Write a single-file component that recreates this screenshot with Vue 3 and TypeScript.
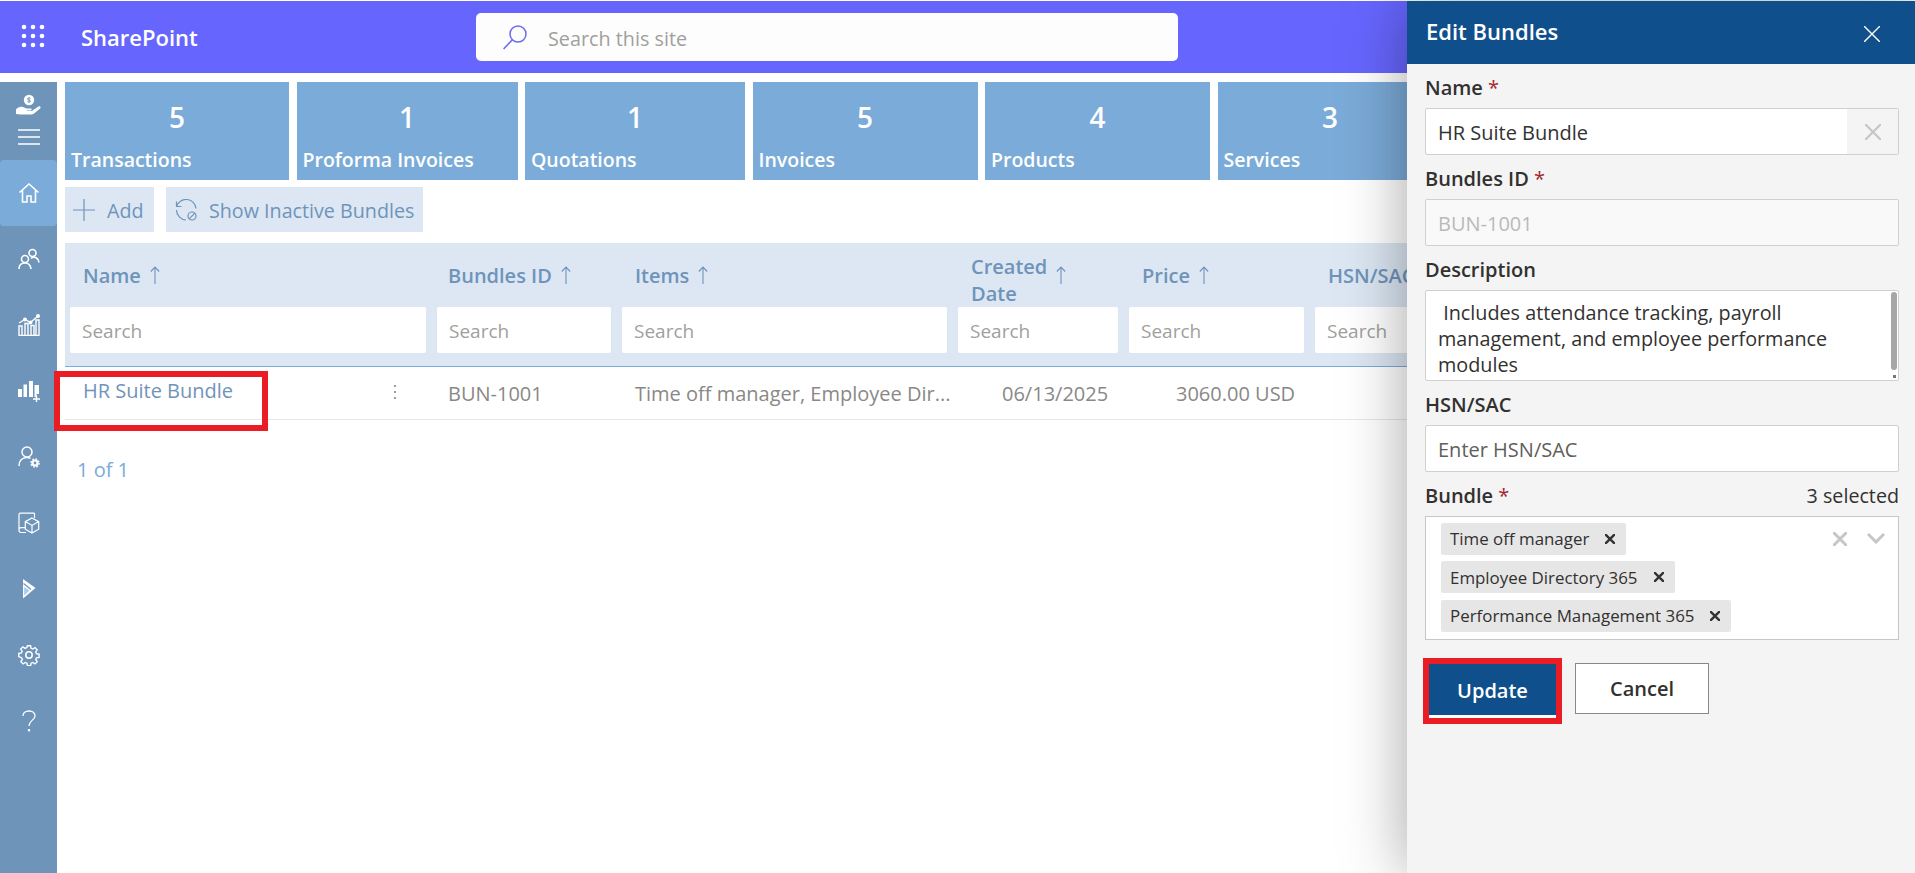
<script setup lang="ts">
const stats = [
  { n: 5, label: 'Transactions', w: 224 },
  { n: 1, label: 'Proforma Invoices', w: 221 },
  { n: 1, label: 'Quotations', w: 220 },
  { n: 5, label: 'Invoices', w: 225 },
  { n: 4, label: 'Products', w: 225 },
  { n: 3, label: 'Services', w: 225 },
]
const columns = [
  { label: 'Name', cls: '' },
  { label: 'Bundles ID', cls: '' },
  { label: 'Items', cls: '' },
  { label: 'Created Date', cls: 'two' },
  { label: 'Price', cls: '' },
  { label: 'HSN/SAC', cls: '' },
]
const chips = ['Time off manager', 'Employee Directory 365', 'Performance Management 365']
</script>

<template>
  <div class="page">
    <header class="topbar">
      <svg class="waffle" width="24" height="24" viewBox="0 0 24 24" fill="#fff">
        <circle cx="3" cy="3" r="2.3"/><circle cx="12" cy="3" r="2.3"/><circle cx="21" cy="3" r="2.3"/>
        <circle cx="3" cy="12" r="2.3"/><circle cx="12" cy="12" r="2.3"/><circle cx="21" cy="12" r="2.3"/>
        <circle cx="3" cy="21" r="2.3"/><circle cx="12" cy="21" r="2.3"/><circle cx="21" cy="21" r="2.3"/>
      </svg>
      <span class="brand">SharePoint</span>
      <div class="site-search">
        <svg width="24" height="25" viewBox="0 0 24 25" fill="none" stroke="#6a6aee" stroke-width="1.500">
          <circle cx="15" cy="9" r="8"/><path d="M9.300 14.700.6 24"/>
        </svg>
        <span>Search this site</span>
      </div>
    </header>

    <div class="body">
      <nav class="side">
        <div class="side-head">
          <svg width="28" height="22" viewBox="0 0 28 22" fill="#fff">
            <circle cx="14" cy="6" r="5.200"/>
            <path d="M1 15.500c2-2.500 5-3.200 7.500-2.200l3 1.100h4.200c1.300 0 1.300 2 0 2h-4l.1.700h5l6.600-4.600c1.600-.9 3 .7 1.700 2l-6.300 5.200c-.8.600-1.500.8-2.500.8H5.500L1 20z"/>
            <path d="M14 3.200v5.600M15.600 4.500c-.8-.7-3.200-.6-3.200.6 0 1.500 3.200.6 3.200 2 0 1.100-2.400 1.200-3.200.5" fill="none" stroke="#6f94ba" stroke-width=".9"/>
          </svg>
          <svg class="burger" width="22" height="16" viewBox="0 0 22 16" stroke="#fff" stroke-width="1.300">
            <path d="M0 1h22M0 8h22M0 15h22"/>
          </svg>
        </div>
        <a class="side-item active">
          <svg width="22" height="22" viewBox="0 0 22 22" fill="none" stroke="#fff" stroke-width="1.600">
            <path d="M1.500 10.500 11 2l9.500 8.500M4.500 8.500V20h4.500v-6h4v6h4.500V8.500"/>
          </svg>
        </a>
        <a class="side-item">
          <svg width="22" height="22" viewBox="0 0 22 22" fill="none" stroke="#fff" stroke-width="1.600">
            <circle cx="14.500" cy="5" r="3.500"/><circle cx="7" cy="11" r="3.500"/>
            <path d="M1 21c0-4 2.500-6 6-6s5.500 2 6 6M13 10.500c1.500-1.500 4-1.500 5.500-.5s2.500 2.500 2.500 4.500"/>
          </svg>
        </a>
        <a class="side-item">
          <svg width="22" height="22" viewBox="0 0 22 22" fill="none" stroke="#fff" stroke-width="1.400">
            <path d="M1 9 7 5.500l5.500 3L20 2"/>
            <circle cx="7" cy="5.500" r="1.300" fill="#fff"/><circle cx="12.500" cy="8.500" r="1.300" fill="#fff"/><circle cx="20" cy="2" r="1.300" fill="#fff"/>
            <path d="M1 21.500V12h3v9.500M7 21.500V9.500h3v12M13 21.500V11.500h3v10M18 21.500V6h3v15.500M.5 21.500h21"/>
          </svg>
        </a>
        <a class="side-item">
          <svg width="22" height="22" viewBox="0 0 22 22" fill="#fff">
            <path d="M0 9h4v8H0zM5.500 4.500H9V17H5.500zM11 1h4v16h-4zM16.500 5H21v9h-2.500v3h-2z"/>
            <path d="M15 19h7M18.500 15.500v7" stroke="#fff" stroke-width="1.400"/>
          </svg>
        </a>
        <a class="side-item">
          <svg width="22" height="22" viewBox="0 0 22 22" fill="none" stroke="#fff" stroke-width="1.500">
            <circle cx="9" cy="6" r="5"/>
            <path d="M1 20c0-5 3-8.500 8-8.500 1.500 0 2.500.3 3.500.8"/>
            <circle cx="17" cy="17" r="2.500" stroke-width="2.200"/>
            <circle cx="17" cy="17" r="4" stroke-width="1.500" stroke-dasharray="1.700 1.440"/>
          </svg>
        </a>
        <a class="side-item">
          <svg width="22" height="22" viewBox="0 0 22 22" fill="none" stroke="#fff" stroke-width="1.200">
            <path d="M8 20.500H3c-1.200 0-2-.8-2-2V2.500c0-.8.500-1.300 1.300-1.300h13.400c.5 0 .8.300.8.800V6M1 17.500c0-1 .8-1.800 2-1.800h4"/>
            <path d="m14 6 6.700 3.600v7.600L14 21l-6.700-3.800V9.600zM7.300 9.600l6.700 3.800 6.700-3.800M14 13.400V21"/>
          </svg>
        </a>
        <a class="side-item">
          <svg width="14" height="20" viewBox="0 0 14 20">
            <path fill="#fff" d="M1 0 13.500 9 1 19.500z"/>
            <path fill="#a9cdec" d="M2.200 8 7.500 11.500 2.200 16.500z"/>
            <path fill="none" stroke="#6f94ba" stroke-width="1.200" d="M1.500 4.500 9 10.500"/>
          </svg>
        </a>
        <a class="side-item">
          <svg width="22" height="22" viewBox="0 0 22 22" fill="none" stroke="#fff" stroke-width="1.500">
            <circle cx="11" cy="11" r="3.200"/>
            <path d="M9.300 1h3.400l.5 2.800 1.900.8 2.300-1.600 2.400 2.400-1.600 2.300.8 1.900 2.800.5v3.400l-2.800.5-.8 1.900 1.600 2.300-2.400 2.400-2.300-1.600-1.900.8-.5 2.800H9.300l-.5-2.800-1.900-.8-2.300 1.600-2.400-2.400 1.600-2.300-.8-1.900L0 12.700V9.300l2.800-.5.8-1.900L2 4.600 4.400 2.200l2.300 1.600 1.900-.8z" transform="translate(.8 .8) scale(.93)"/>
          </svg>
        </a>
        <a class="side-item">
          <svg width="14" height="22" viewBox="0 0 14 22" fill="none" stroke="#fff" stroke-width="1.300">
            <path d="M1 6c0-3 2.500-5 6-5s6 2 6 5c0 4-6 4.500-6 10"/><circle cx="7" cy="20.200" r=".6" fill="#fff"/>
          </svg>
        </a>
      </nav>

      <main class="main">
        <section class="stats">
          <div v-for="s in stats" :key="s.label" class="stat" :style="{ width: s.w + 'px' }">
            <div class="stat-n">{{ s.n }}</div>
            <div class="stat-l">{{ s.label }}</div>
          </div>
        </section>

        <section class="toolbar">
          <button class="tool add">
            <svg width="22" height="22" viewBox="0 0 22 22" stroke="#6f94ba" stroke-width="1.200"><path d="M11 0v22M0 11h22"/></svg>
            <span>Add</span>
          </button>
          <button class="tool inactive">
            <svg width="22" height="22" viewBox="0 0 22 22" fill="none" stroke="#6f94ba" stroke-width="1.200">
              <path d="M1.500 7.500A10 10 0 0 1 21 9.500M1.500 2.500v5h5M1.500 11a10 10 0 0 0 9.500 10"/>
              <circle cx="17" cy="17" r="4"/><path d="m14.200 19.800 5.600-5.600"/>
            </svg>
            <span>Show Inactive Bundles</span>
          </button>
        </section>

        <section class="table">
          <div class="thead">
            <div class="grid labels">
              <div v-for="c in columns" :key="c.label" class="th" :class="c.cls">
                <span class="th-text">{{ c.label }}</span>
                <svg v-if="c.label !== 'HSN/SAC'" width="10" height="18" viewBox="0 0 10 18" fill="none" stroke="#6f94ba" stroke-width="1.100"><path d="M5 18V1M.8 5.500 5 1l4.200 4.500"/></svg>
              </div>
            </div>
            <div class="grid filters">
              <div v-for="c in columns" :key="c.label" class="filter">Search</div>
            </div>
          </div>
          <div class="row">
            <div class="grid row-grid">
              <div class="cell name-cell">
                <a class="link">HR Suite Bundle</a>
                <svg class="kebab" width="4" height="16" viewBox="0 0 4 16" fill="#7a7a7a"><circle cx="2" cy="2" r="1"/><circle cx="2" cy="8" r="1"/><circle cx="2" cy="14" r="1"/></svg>
              </div>
              <div class="cell id">BUN-1001</div>
              <div class="cell">Time off manager, Employee Dir...</div>
              <div class="cell date">06/13/2025</div>
              <div class="cell price">3060.00 USD</div>
              <div class="cell"></div>
            </div>
          </div>
          <div class="count">1 of 1</div>
        </section>

        <div class="mark mark-name"></div>
      </main>
    </div>

    <aside class="panel">
      <div class="panel-head">
        <span>Edit Bundles</span>
        <svg width="16" height="16" viewBox="0 0 16 16" stroke="#fff" stroke-width="1.400"><path d="m0 0 16 16M16 0 0 16"/></svg>
      </div>
      <div class="form">
        <label class="lab">Name <i>*</i></label>
        <div class="field name-field">
          <span class="val">HR Suite Bundle</span>
          <span class="clear"><svg width="16" height="16" viewBox="0 0 16 16" stroke="#c8c6c4" stroke-width="2.200"><path d="m0 0 16 16M16 0 0 16"/></svg></span>
        </div>
        <label class="lab">Bundles ID <i>*</i></label>
        <div class="field disabled"><span class="val">BUN-1001</span></div>
        <label class="lab">Description</label>
        <div class="area">
          <p>&nbsp;Includes attendance tracking, payroll management, and employee performance modules</p>
          <div class="thumb"></div>
          <div class="grip"></div>
        </div>
        <label class="lab">HSN/SAC</label>
        <div class="field"><span class="val hint">Enter HSN/SAC</span></div>
        <div class="lab-row">
          <label class="lab">Bundle <i>*</i></label>
          <span class="selected">3 selected</span>
        </div>
        <div class="multi">
          <div class="chips">
            <div v-for="c in chips" :key="c" class="chip">
              <span>{{ c }}</span>
              <svg width="10" height="10" viewBox="0 0 10 10" stroke="#333" stroke-width="2.400"><path d="m0 0 10 10M10 0 0 10"/></svg>
            </div>
          </div>
          <div class="multi-icons">
            <svg width="14" height="14" viewBox="0 0 14 14" stroke="#c8c6c4" stroke-width="3"><path d="m0 0 14 14M14 0 0 14"/></svg>
            <svg width="18" height="11" viewBox="0 0 18 11" fill="none" stroke="#c8c6c4" stroke-width="3"><path d="m1 1 8 8 8-8"/></svg>
          </div>
        </div>
        <div class="actions">
          <button class="btn update">Update</button>
          <button class="btn cancel">Cancel</button>
        </div>
      </div>
    </aside>
  </div>
</template>

<style>
html, body { margin: 0; background: #fff; overflow: hidden; }
</style>

<style scoped>
.page {
  position: relative;
  width: 1915px;
  height: 873px;
  overflow: hidden;
  font-family: "Open Sans", "Noto Sans", sans-serif;
  background: #fff;
  padding-top: 1px;
  box-sizing: border-box;
}
.topbar {
  height: 72px;
  background: #6666ff;
  display: flex;
  align-items: center;
  color: #fff;
}
.waffle { margin-left: 21px; margin-top: -2px; flex: none; }
.brand { margin-left: 36px; font-size: 22px; font-weight: 600; width: 395px; flex: none; }
.site-search {
  width: 702px;
  height: 48px;
  background: #fdfdfd;
  border-radius: 5px;
  display: flex;
  align-items: center;
  gap: 21px;
  padding-left: 27px;
  box-sizing: border-box;
  color: #a19f9d;
  font-size: 19.800px;
  flex: none;
}
.site-search span { margin-top: 2px; }
.body { display: flex; height: 800px; }
.side {
  width: 57px;
  margin-top: 9px;
  background: #6f94ba;
  flex: none;
  display: flex;
  flex-direction: column;
}
.side-head {
  height: 78px;
  display: flex;
  flex-direction: column;
  align-items: center;
  padding-top: 12px;
  box-sizing: border-box;
}
.burger { margin-top: 13px; }
.side-item {
  height: 66px;
  display: flex;
  align-items: center;
  justify-content: center;
  flex: none;
}
.side-item.active { background: #7babd8; border-radius: 4px; }
.main {
  position: relative;
  flex: 1;
  min-width: 0;
  padding: 9px 0 0 8px;
}
.stats { display: flex; gap: 7.500px; height: 98px; width: 1500px; }
.stat {
  background: #7babd8;
  color: #fff;
  flex: none;
  height: 98px;
  box-sizing: border-box;
  font-weight: 600;
}
.stat-n { text-align: center; font-size: 28px; line-height: 36px; padding-top: 17px; }
.stat-l { padding-left: 6px; font-size: 19.500px; line-height: 28px; padding-top: 11px; }
.toolbar { display: flex; gap: 12px; margin-top: 7px; height: 45px; }
.tool {
  border: 0;
  background: #dce7f3;
  color: #6f94ba;
  font: inherit;
  font-size: 19.700px;
  height: 45px;
  display: flex;
  align-items: center;
  padding: 0;
}
.tool span { margin-top: 2px; }
.add { width: 89px; padding-left: 8px; gap: 12px; }
.inactive { width: 257px; padding-left: 9px; gap: 12px; }
.table { margin-top: 11px; width: 1500px; }
.thead {
  background: #dce7f3;
  height: 124px;
  border-bottom: 1.500px solid #7babd8;
  box-sizing: border-box;
  padding-left: 5px;
}
.grid {
  display: grid;
  grid-template-columns: 356px 174px 325px 160px 175px 200px;
  column-gap: 11px;
}
.labels { height: 64px; align-items: center; }
.th {
  display: flex;
  align-items: center;
  gap: 9px;
  padding-left: 13px;
  color: #6f94ba;
  font-size: 20px;
  font-weight: 600;
}
.th:nth-child(2) { padding-left: 11px; }
.th.two .th-text { width: 76px; line-height: 27px; margin-top: 9px; }
.filter {
  height: 46px;
  background: #fff;
  border-radius: 2px;
  color: #a19f9d;
  font-size: 19px;
  line-height: 48px;
  padding-left: 12px;
  box-sizing: border-box;
}
.row {
  height: 53px;
  border-bottom: 1.500px solid #e6e6e6;
  box-sizing: border-box;
  padding-left: 5px;
}
.row-grid { height: 100%; align-items: center; }
.cell {
  padding-left: 13px;
  color: #8a8886;
  font-size: 20px;
  white-space: nowrap;
  margin-top: 1px;
}
.cell.id { padding-left: 11px; }
.name-cell { position: relative; align-self: start; padding-top: 10px; margin-top: 0; }
.link { color: #6f94ba; font-size: 20px; }
.kebab { position: absolute; left: 323px; top: 17px; }
.date { padding-left: 44px; }
.price { padding-left: 47px; }
.count { margin: 36px 0 0 12px; color: #7babd8; font-size: 20px; line-height: 27px; }
.mark { position: absolute; border: 6px solid #ea1c24; box-sizing: border-box; pointer-events: none; }
.mark-name { left: -3px; top: 298px; width: 214px; height: 60px; }

.panel {
  position: absolute;
  left: 1407px;
  top: 1px;
  width: 508px;
  height: 872px;
  background: #f4f4f4;
  box-shadow: 0 0 60px rgba(0, 0, 0, .36);
}
.panel-head {
  height: 63px;
  background: #0f4f8b;
  color: #fff;
  display: flex;
  align-items: center;
  justify-content: space-between;
  padding: 0 35px 0 19px;
  font-size: 22px;
  font-weight: 600;
}
.panel-head svg { margin-top: 2px; }
.panel-head span { margin-top: -3px; }
.form { padding: 0 16px 0 18px; color: #323130; }
.lab { display: block; font-size: 20px; font-weight: 600; line-height: 27px; height: 27px; margin: 10px 0 7px; }
.lab i { color: #a4262c; font-style: normal; font-weight: 400; }
.field {
  height: 47px;
  box-sizing: border-box;
  background: #fff;
  border: 1.500px solid #d2d0ce;
  border-radius: 2px;
  display: flex;
  align-items: center;
}
.val { padding-left: 12px; font-size: 20px; flex: 1; margin-top: 2px; }
.clear {
  width: 51px;
  align-self: stretch;
  background: #f4f4f4;
  display: flex;
  align-items: center;
  justify-content: center;
}
.disabled { background: #f9f9f9; }
.disabled .val { color: #b9b9b9; }
.hint { color: #605e5c; }
.area {
  position: relative;
  height: 91px;
  box-sizing: border-box;
  background: #fff;
  border: 1.500px solid #d2d0ce;
  border-radius: 2px;
  overflow: hidden;
}
.area p {
  margin: 0;
  padding: 9px 12px 0 12px;
  width: 420px;
  font-size: 19.800px;
  line-height: 26px;
}
.thumb { position: absolute; right: 1px; top: 1px; width: 6px; height: 78px; border-radius: 3px; background: #a6a6a6; }
.grip { position: absolute; right: 2px; bottom: 2px; width: 3px; height: 3px; background: #777; }
.lab-row { display: flex; justify-content: space-between; align-items: flex-start; }
.selected { font-size: 19.700px; line-height: 27px; margin-top: 10px; color: #323130; }
.multi {
  height: 124px;
  box-sizing: border-box;
  background: #fff;
  border: 1.500px solid #c8c6c4;
  display: flex;
  justify-content: space-between;
  padding: 5.500px 13px 0 15px;
}
.chips { display: flex; flex-direction: column; align-items: flex-start; gap: 6.500px; }
.chip {
  height: 32px;
  background: #e6e6e6;
  border-radius: 2px;
  display: flex;
  align-items: center;
  gap: 16px;
  padding: 0 11px 0 9px;
  font-size: 16.900px;
  color: #323130;
}
.multi-icons { display: flex; align-items: center; gap: 20px; height: 32px; }
.actions { display: flex; align-items: flex-start; gap: 19px; margin-top: 24px; }
.btn { font: inherit; font-size: 20px; font-weight: 600; padding: 0; }
.update {
  width: 127px;
  height: 54px;
  margin-left: 4px;
  color: #fff;
  background: #0f4f8b;
  border: 0;
  border-bottom: 3.500px solid #fff;
  outline: 6px solid #ea1c24;
  box-sizing: border-box;
  padding-top: 1px;
}
.cancel {
  width: 134px;
  height: 51px;
  margin-top: -1px;
  background: #fff;
  color: #323130;
  border: 1.500px solid #8a8886;
  box-sizing: border-box;
}
</style>
